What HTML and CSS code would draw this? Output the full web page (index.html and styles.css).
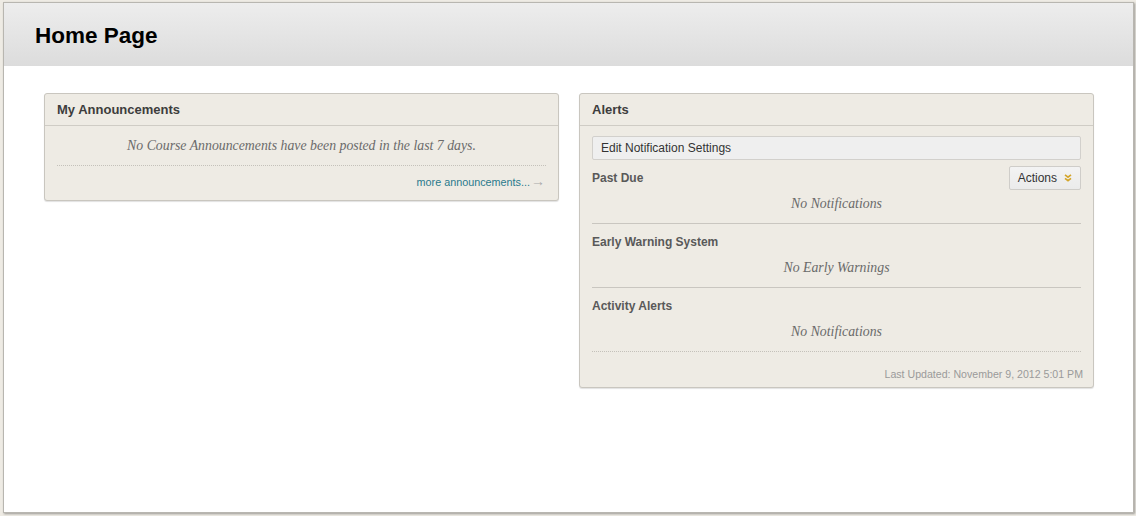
FILE: index.html
```html
<!DOCTYPE html>
<html>
<head>
<meta charset="utf-8">
<link rel="stylesheet" href="styles.css">
</head>
<body>
<div class="frame">
  <div class="page-header"><h1>Home Page</h1></div>
  <div class="content">
    <div class="card">
      <div class="card-title">My Announcements</div>
      <div class="card-body">
        <p class="empty announce-msg">No Course Announcements have been posted in the last 7 days.</p>
        <div class="announce-footer"><a class="more-link" href="#">more announcements...</a><span class="arrow">&#8594;</span></div>
      </div>
    </div>
    <div class="card">
      <div class="card-title">Alerts</div>
      <div class="card-body">
        <div class="edit-btn">Edit Notification Settings</div>
        <div class="section">
          <div class="section-row">
            <span class="section-title">Past Due</span>
            <span class="actions-btn">Actions
              <svg class="chev" width="8" height="8" viewBox="0 0 8 8"><path d="M1 0.8 L4 3.2 L7 0.8 M1 4.3 L4 6.7 L7 4.3" fill="none" stroke="#d4a52a" stroke-width="1.6"/></svg>
            </span>
          </div>
          <p class="empty">No Notifications</p>
        </div>
        <div class="section">
          <div class="section-row"><span class="section-title">Early Warning System</span></div>
          <p class="empty">No Early Warnings</p>
        </div>
        <div class="section last">
          <div class="section-row"><span class="section-title">Activity Alerts</span></div>
          <p class="empty">No Notifications</p>
        </div>
        <div class="updated">Last Updated: November 9, 2012 5:01 PM</div>
      </div>
    </div>
  </div>
</div>
</body>
</html>
```

FILE: styles.css
```css
html, body {
  margin: 0;
  padding: 0;
}
body {
  background: #eeebe4;
  font-family: "Liberation Sans", Arial, sans-serif;
  width: 1136px;
  height: 516px;
  overflow: hidden;
}
.frame {
  margin: 2px 0 0 3px;
  width: 1129px;
  height: 509px;
  border: 1px solid #b8b6b0;
  background: #ffffff;
  box-shadow: 1px 1px 2px rgba(0,0,0,0.35);
}
.page-header {
  height: 63px;
  background: linear-gradient(#ededed, #dcdcdc);
  display: flex;
  align-items: center;
  padding-left: 31px;
}
.page-header h1 {
  margin: 0;
  font-size: 22.5px;
  font-weight: bold;
  color: #000;
  padding-top: 3px;
}
.content {
  display: grid;
  grid-template-columns: 515px 515px;
  column-gap: 20px;
  align-items: start;
  padding: 27px 0 0 40px;
}
.card {
  background: #eeebe4;
  border: 1px solid #c9c6bf;
  border-radius: 3px;
  box-shadow: 0 1px 1px rgba(0,0,0,0.12);
}
.card-title {
  height: 31px;
  line-height: 31px;
  padding-left: 12px;
  font-size: 13px;
  font-weight: bold;
  color: #3d3d3d;
  border-bottom: 1px solid #cfccc5;
}
.card-body {
  padding: 0 12px 0 12px;
}
.empty {
  margin: 0;
  text-align: center;
  font-family: "Liberation Serif", Georgia, serif;
  font-style: italic;
  font-size: 13.8px;
  line-height: 20px;
  color: #6a6a6a;
}
.announce-msg {
  padding: 10px 0 9px;
  border-bottom: 1px dotted #c4c1ba;
}
.announce-footer {
  text-align: right;
  padding: 6px 1px 9px 0;
  line-height: 18px;
  font-size: 10.8px;
}
.more-link {
  color: #2a7a8c;
  text-decoration: none;
}
.arrow {
  color: #aaaaaa;
  font-size: 14px;
  margin-left: 1px;
}
.edit-btn {
  margin-top: 10px;
  height: 22px;
  line-height: 22px;
  padding-left: 8px;
  background: #efefef;
  border: 1px solid #d2d0cc;
  border-radius: 2px;
  font-size: 12px;
  color: #333;
}
.section {
  padding: 6px 0 9px;
  border-bottom: 1px solid #c9c6c0;
}
.section.last {
  border-bottom: 1px dotted #c4c1ba;
}
.section-row {
  display: flex;
  justify-content: space-between;
  align-items: center;
  height: 24px;
  margin-bottom: 4px;
}
.section-title {
  font-size: 12px;
  font-weight: bold;
  color: #595959;
}
.actions-btn {
  display: flex;
  align-items: center;
  gap: 7px;
  height: 22px;
  padding: 0 8px 0 8px;
  background: linear-gradient(#f3f3f3, #ebebeb);
  border: 1px solid #cfcdc9;
  border-radius: 2px;
  font-size: 12px;
  color: #333;
}
.chev {
  display: block;
}
.updated {
  text-align: right;
  padding: 13px 0 4px;
  margin-right: -2px;
  line-height: 18px;
  font-size: 10.6px;
  color: #9a9a9a;
}
```
